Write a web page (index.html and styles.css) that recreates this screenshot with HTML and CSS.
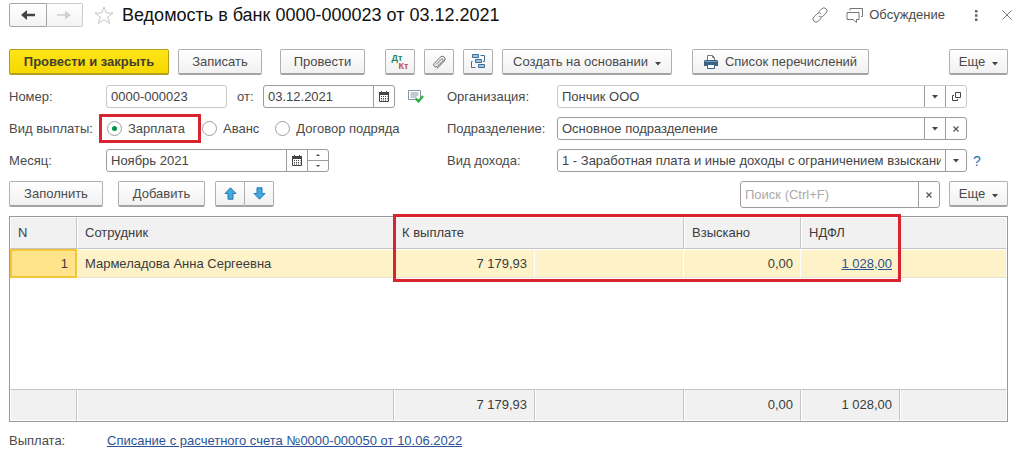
FILE: index.html
```html
<!DOCTYPE html>
<html lang="ru">
<head>
<meta charset="utf-8">
<meta name="viewport" content="width=device-width, initial-scale=1">
<title>Ведомость в банк 0000-000023 от 03.12.2021</title>
<link rel="stylesheet" href="styles.css">
</head>
<body>
<svg class="sprite" aria-hidden="true">
  <symbol id="calendar" viewBox="0 0 10 11">
    <path d="M2.500 0v2M7.500 0v2" stroke="#444" fill="none"/>
    <path d="M.5 1.500h9v9h-9z" fill="#fff" stroke="#444"/>
    <path d="M0 1h10v3H0z" fill="#444"/>
    <path d="M2 5.500h6.500M2 7.500h6.500M2 9h6.500" stroke="#444" stroke-dasharray="1 1" fill="none"/>
  </symbol>
  <symbol id="down" viewBox="0 0 6 4"><path d="M0 0h6L3 3.500z" fill="#444"/></symbol>
  <symbol id="cross" viewBox="0 0 6 6"><path d="M.5.5l5 5M5.500.5l-5 5" stroke="#555" stroke-width="1.200" fill="none"/></symbol>
  <symbol id="move" viewBox="0 0 13 13"><path d="M6.500.8L12 6.500H9v5.700H4V6.500H1z" fill="#3fa9e0" stroke="#2b79ab"/></symbol>
</svg>
<main class="page">
  <header class="title-bar">
    <div class="nav">
      <button type="button" aria-label="Назад"><svg width="14" height="10" viewBox="0 0 14 10"><path d="M6 0v3.700h8v2.600H6V10L0 5z" fill="#444"/></svg></button>
      <button type="button" class="faded" aria-label="Вперед"><svg width="14" height="10" viewBox="0 0 14 10"><path d="M8 .5v3.700H0v1.600h8v3.700L14 5z" fill="#d0d0d0"/></svg></button>
    </div>
    <button type="button" class="plain" aria-label="В избранное"><svg width="20" height="19" viewBox="0 0 20 19"><path d="M10 1l2.300 6H19l-5.300 4 2 6.500L10 13.700l-5.700 3.800 2-6.500L1 7h6.700z" fill="none" stroke="#c6c6c6"/></svg></button>
    <h1>Ведомость в банк 0000-000023 от 03.12.2021</h1>
    <div class="title-tools">
      <button type="button" class="plain" aria-label="Ссылка"><svg width="16" height="16" viewBox="0 0 16 16" fill="none" stroke="#777"><path d="M6.500 5L9.800 1.800a2.900 2.900 0 0 1 4.300 4.200L10.900 9.300a2.900 2.900 0 0 1-4 0"/><path d="M9.500 11L6.200 14.200A2.900 2.900 0 0 1 1.900 10L5.100 6.700a2.900 2.900 0 0 1 4 0"/></svg></button>
      <button type="button" class="plain talk"><svg width="17" height="15" viewBox="0 0 17 15" fill="none" stroke="#777"><path d="M1 4.500h12v7h-2.500v3L7 11.500H1z"/><path d="M4 2.500v-2h12.500v8H15"/></svg>Обсуждение</button>
      <button type="button" class="plain dots" aria-label="Меню"><svg width="3" height="11" viewBox="0 0 3 11"><path d="M0 0h2.500v2.500H0zM0 4.200h2.500v2.500H0zM0 8.400h2.500v2.500H0z" fill="#666"/></svg></button>
      <button type="button" class="plain" aria-label="Закрыть"><svg width="10" height="10" viewBox="0 0 10 10"><path d="M.5.5l9 9M9.500.5l-9 9" stroke="#777"/></svg></button>
    </div>
  </header>

  <div class="toolbar">
    <button type="button" class="btn primary">Провести и закрыть</button>
    <button type="button" class="btn save">Записать</button>
    <button type="button" class="btn post">Провести</button>
    <button type="button" class="btn icon first-icon" aria-label="Дебет и кредит"><span class="dtkt"><b>Дт</b><b>Кт</b></span></button>
    <button type="button" class="btn icon" aria-label="Файлы"><svg width="14" height="14" viewBox="0 0 14 14" fill="none" stroke="#666"><path d="M4 9.500l5.200-5.200a1 1 0 0 1 1.600 1.500L5.300 11.300a2 2 0 0 1-3-2.900L8.300 2.200a2.700 2.700 0 0 1 4 3.800L6.800 11.800a3 3 0 0 1-2 1.200"/></svg></button>
    <button type="button" class="btn icon" aria-label="Структура"><svg width="15" height="15" viewBox="0 0 15 15" fill="#9cc3e0" stroke="#3f6f96"><path d="M1.500.5h6v3h-6zM4.500 5.500h6v3h-6zM7.500 10.500h6v3h-6z"/><path d="M9.500 1.500h4v6h-1.500M1.500 7.500h-1v6h4" fill="none"/></svg></button>
    <button type="button" class="btn create">Создать на основании <svg class="caret" width="6" height="4"><use href="#down"/></svg></button>
    <button type="button" class="btn print"><svg width="14" height="14" viewBox="0 0 14 14"><path d="M3.500 5V.5h5L10.500 2.500V5" fill="#fff" stroke="#777"/><path d="M8.500.5v2h2" fill="none" stroke="#777"/><path d="M1 5h12l1 1v5H0V6z" fill="#3b6285"/><path d="M1 6.500h12" stroke="#7aa0c0"/><path d="M3.500 9.500h7v4h-7z" fill="#fff" stroke="#3b6285"/></svg>Список перечислений</button>
    <button type="button" class="btn more">Еще <svg class="caret" width="6" height="4"><use href="#down"/></svg></button>
  </div>

  <form class="form">
    <div class="row">
      <label class="name" for="num">Номер:</label>
      <div class="field light number"><input id="num" value="0000-000023"></div>
      <label class="from" for="date">от:</label>
      <div class="field date"><input id="date" value="03.12.2021"><button type="button" aria-label="Календарь"><svg width="10" height="11"><use href="#calendar"/></svg></button></div>
      <svg class="posted" width="16" height="13" viewBox="0 0 16 13"><path d="M.5.5h12v9H.5z" fill="#fff" stroke="#8795a3"/><path d="M2.500 3h8M2.500 5h8M2.500 7h6" stroke="#8795a3"/><path d="M7.500 8.500l3 3L15 6" fill="none" stroke="#2fae3f" stroke-width="2.200"/></svg>
    </div>
    <div class="row">
      <label class="name" for="org">Организация:</label>
      <div class="field light wide"><div class="choice"><select id="org"><option>Пончик ООО</option></select><span class="drop"><svg width="6" height="4"><use href="#down"/></svg></span></div><button type="button" aria-label="Открыть"><svg width="9" height="9" viewBox="0 0 9 9" fill="none" stroke="#444"><path d="M3.500.5h5v5h-5z"/><path d="M2 3.500H.5v5h5V7"/></svg></button></div>
    </div>
    <div class="row radios" role="radiogroup" aria-labelledby="kind">
      <span class="name" id="kind">Вид выплаты:</span>
      <label class="marked"><input type="radio" name="kind" checked>Зарплата</label>
      <label><input type="radio" name="kind">Аванс</label>
      <label class="contract"><input type="radio" name="kind">Договор подряда</label>
    </div>
    <div class="row">
      <label class="name" for="dep">Подразделение:</label>
      <div class="field wide"><div class="choice"><select id="dep"><option>Основное подразделение</option></select><span class="drop"><svg width="6" height="4"><use href="#down"/></svg></span></div><button type="button" aria-label="Очистить"><svg width="6" height="6"><use href="#cross"/></svg></button></div>
    </div>
    <div class="row">
      <label class="name" for="month">Месяц:</label>
      <div class="field month"><input id="month" value="Ноябрь 2021"><button type="button" aria-label="Календарь"><svg width="10" height="11"><use href="#calendar"/></svg></button>
        <div class="spin"><button type="button" aria-label="Больше"><svg width="4" height="2" viewBox="0 0 4 2"><path d="M0 2h4L2 0z" fill="#444"/></svg></button><button type="button" aria-label="Меньше"><svg width="4" height="2" viewBox="0 0 4 2"><path d="M0 0h4L2 2z" fill="#444"/></svg></button></div></div>
    </div>
    <div class="row">
      <label class="name" for="income">Вид дохода:</label>
      <div class="field wide"><div class="choice"><select id="income"><option>1 - Заработная плата и иные доходы с ограничением взыскания</option></select><span class="drop"><svg width="6" height="4"><use href="#down"/></svg></span></div></div>
      <button type="button" class="plain help">?</button>
    </div>
  </form>

  <div class="commands">
    <button type="button" class="btn fill">Заполнить</button>
    <button type="button" class="btn add">Добавить</button>
    <div class="pair"><button type="button" class="btn" aria-label="Вверх"><svg width="13" height="13"><use href="#move"/></svg></button><button type="button" class="btn" aria-label="Вниз"><svg class="flip" width="13" height="13"><use href="#move"/></svg></button></div>
    <div class="field search"><input type="text" aria-label="Поиск" placeholder="Поиск (Ctrl+F)"><button type="button" aria-label="Очистить"><svg width="6" height="6"><use href="#cross"/></svg></button></div>
    <button type="button" class="btn more">Еще <svg class="caret" width="6" height="4"><use href="#down"/></svg></button>
  </div>

  <div class="table-box">
    <table>
      <colgroup><col class="c-n"><col class="c-name"><col class="c-pay"><col class="c-extra"><col class="c-held"><col class="c-tax"><col></colgroup>
      <thead><tr><th>N</th><th>Сотрудник</th><th colspan="2">К выплате</th><th>Взыскано</th><th>НДФЛ</th><th></th></tr></thead>
      <tbody>
        <tr class="selected"><td class="current num">1</td><td>Мармеладова Анна Сергеевна</td><td class="num">7 179,93</td><td></td><td class="num">0,00</td><td class="num"><a href="#">1 028,00</a></td><td></td></tr>
        <tr class="empty"><td colspan="7"></td></tr>
      </tbody>
      <tfoot><tr><td></td><td></td><td class="num">7 179,93</td><td></td><td class="num">0,00</td><td class="num">1 028,00</td><td></td></tr></tfoot>
    </table>
    <div class="frame"></div>
  </div>

  <footer class="row payment"><span class="name">Выплата:</span><a href="#">Списание с расчетного счета №0000-000050 от 10.06.2022</a></footer>
</main>
</body>
</html>
```
FILE: styles.css
```css
* { box-sizing: border-box; }
body { margin: 0; background: #fff; color: #4a4a4a; font: 13px/16px "Liberation Sans", Arial, sans-serif; }
button, input, select { font: inherit; color: inherit; }
button { display: flex; align-items: center; justify-content: center; padding: 0; margin: 0; background: none; border: 0; }
svg { display: block; flex: none; }
a { color: #2c5394; }
.sprite { position: absolute; width: 0; height: 0; }
.page { padding: 3px 11px 0 9px; }

.title-bar { display: flex; align-items: center; height: 24px; }
.nav { display: flex; width: 74px; height: 24px; margin-right: 11px; }
.nav button { flex: 1; border: 1px solid #a5a5a5; border-radius: 2px 0 0 2px; background: linear-gradient(#fff, #f3f3f3); }
.nav .faded { border-color: #ccc; border-left: 0; border-radius: 0 2px 2px 0; }
h1 { flex: 1; margin: 0 0 0 8px; font-size: 18px; line-height: 24px; font-weight: 400; color: #111; white-space: nowrap; }
.title-tools { display: flex; align-items: center; }
.talk { gap: 6px; margin-left: 18px; }
.dots { margin: 0 24px 0 30px; }
.title-tools > :last-child { margin-right: -4px; }

.btn { height: 26px; padding: 0 8px; border: 1px solid #b0b0b0; border-bottom: 2px solid #a3a3a3; border-radius: 2px; background: linear-gradient(#fff, #f1f1f1); white-space: nowrap; }
.primary { width: 160px; border-color: #b59d1d; background: linear-gradient(#ffe617, #f5d800); font-weight: 700; color: #433f2d; }
.caret { margin: 4px 0 0 7px; }
.toolbar, .commands { display: flex; }
.toolbar { gap: 9px; margin-top: 22px; }
.save { width: 84px; }
.post { width: 85px; margin-left: 9px; }
.icon { width: 30px; padding: 0; }
.first-icon { margin-left: 11px; }
.create { width: 170px; }
.print { width: 177px; margin-left: 11px; gap: 7px; }
.more { width: 59px; margin-left: auto; }
.dtkt { display: grid; width: 17px; font-size: 9px; line-height: 8px; color: #24875a; }
.dtkt b { text-align: left; }
.dtkt b + b { text-align: right; color: #c24a4a; }

.form { display: grid; grid-template-columns: 438px 1fr; row-gap: 9px; margin-top: 10px; }
.row { display: flex; align-items: center; height: 23px; white-space: nowrap; }
.name { flex: none; width: 97px; }
.form > :nth-child(even) .name { width: 110px; }
.field { display: flex; height: 23px; border: 1px solid #9c9c9c; border-radius: 3px; background: #fff; }
.light { border-color: #c8c8c8; }
.field input { flex: 1; width: 0; min-width: 0; padding: 0 4px; border: 0; background: none; outline: 0; color: #444; }
.field button { width: 21px; border-left: 1px solid #9c9c9c; }
.number { width: 121px; }
.from { margin: 0 10px; width: 16px; }
.date { width: 132px; }
.posted { margin-left: 13px; }
.month { width: 223px; }
.spin { display: grid; width: 21px; border-left: 1px solid #9c9c9c; }
.spin button { width: auto; border-left: 0; }
.spin button + button { border-top: 1px solid #9c9c9c; }
.wide { flex: 1; margin-right: 41px; }
.choice { display: grid; flex: 1; min-width: 0; grid-template-columns: 1fr 21px; }
.choice select { grid-area: 1 / 1 / 2 / 3; appearance: none; min-width: 0; width: 100%; padding: 0 25px 0 4px; border: 0; background: none; text-overflow: clip; color: #444; }
.drop { grid-area: 1 / 2; display: grid; place-items: center; border-left: 1px solid #9c9c9c; pointer-events: none; }
.help { width: 8px; margin: 0 27px 0 -35px; font-size: 14px; color: #1b75ad; }

.radios label { display: flex; align-items: center; height: 23px; }
.radios input { appearance: none; display: grid; place-items: center; width: 15px; height: 15px; margin: 0 6px 0 0; border: 1px solid #a0a0a0; border-radius: 50%; background: #fff; }
.radios input:checked::before { content: ""; width: 5px; height: 5px; border-radius: 50%; background: #00934a; }
.radios .marked { position: relative; width: 96px; padding-left: 1px; }
.marked::after { content: ""; position: absolute; inset: -3px 1px -3px -7px; border: 3px solid #d9232e; }
.contract { margin-left: 16px; }

.commands { margin-top: 9px; }
.fill { width: 94px; }
.add { width: 87px; margin-left: 15px; }
.pair { display: flex; margin-left: 10px; }
.pair .btn { width: 30px; padding: 0; border-radius: 2px 0 0 2px; }
.pair .btn + .btn { width: 29px; border-left: 0; border-radius: 0 2px 2px 0; }
.flip { transform: rotate(180deg); }
.search { width: 200px; height: 27px; margin-left: auto; }
.search input::placeholder { color: #aaa; opacity: 1; }
.commands .more { margin-left: 9px; }

.table-box { position: relative; margin-top: 8px; border: 1px solid #999; }
table { width: 100%; table-layout: fixed; border-collapse: separate; border-spacing: 0; color: #3c3c3c; }
.c-n { width: 67px; }
.c-name { width: 317px; }
.c-pay { width: 141px; }
.c-extra { width: 149px; }
.c-held { width: 117px; }
.c-tax { width: 99px; }
th, td { padding: 0 8px; text-align: left; font-weight: 400; white-space: nowrap; }
th, tfoot td { height: 32px; background: #f1f1f1; border: 1px solid #fff; border-right-color: #c4c4c4; }
th { padding: 0 7px; border-bottom-color: #c4c4c4; }
tfoot td { border-top-color: #c4c4c4; }
tr > :last-child { border-right-color: #fff; }
tbody td { height: 29px; }
.selected td { background: #fdf2c8; border: 1px solid #fff; border-left: 0; border-bottom-color: #e6e0d0; }
.selected .current { background: #ffe48c; border: 2px solid #f2c637; }
.empty td { height: 111px; }
.num { text-align: right; padding: 0 7px; }
.frame { position: absolute; top: -3px; left: 383px; width: 508px; height: 68px; border: 3px solid #d9232e; pointer-events: none; }
.payment { margin-top: 7px; }
.payment .name { width: 98px; }
```
